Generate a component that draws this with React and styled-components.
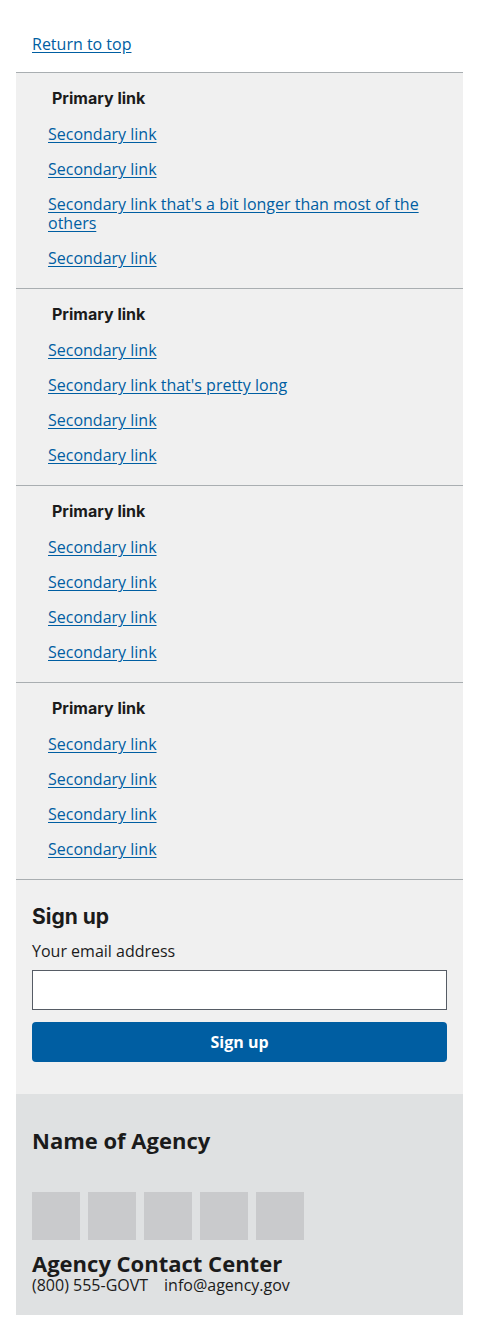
import React from 'react';
import styled, { createGlobalStyle } from 'styled-components';

const GlobalStyle = createGlobalStyle`
  body {
    margin: 0;
    background: #fff;
    font-family: 'Open Sans', 'Liberation Sans', sans-serif;
    color: #1b1b1b;
  }
`;

const Page = styled.div`
  padding: 0 16px 16px;
`;

const ReturnRow = styled.div`
  padding: 32px 16px 16px;
  font-size: 16px;
  line-height: 24px;
`;

const Link = styled.a`
  color: #005ea2;
  text-decoration: underline;
  text-underline-offset: 2px;
`;

const Nav = styled.nav`
  background: #f0f0f0;
`;

const Section = styled.section`
  border-top: 1px solid #a9aeb1;
  padding: 16px 16px 20px 32px;
`;

const PrimaryLink = styled.div`
  font-family: 'Inter', 'Open Sans', sans-serif;
  font-weight: 700;
  font-size: 16px;
  line-height: 18px;
  padding-left: 4px;
  margin-bottom: 18px;
`;

const SecondaryList = styled.ul`
  list-style: none;
  margin: 0;
  padding: 0;
  display: flex;
  flex-direction: column;
  gap: 16px;
`;

const SecondaryItem = styled.li`
  font-size: 16px;
  line-height: 19px;
`;

const SignUp = styled.section`
  background: #f0f0f0;
  border-top: 1px solid #a9aeb1;
  padding: 24px 16px 32px;
`;

const SignUpHeading = styled.h3`
  margin: 0 0 9px;
  font-family: 'Inter', 'Open Sans', sans-serif;
  font-weight: 700;
  font-size: 21px;
  line-height: 26px;
`;

const Label = styled.label`
  display: block;
  font-size: 16px;
  line-height: 24px;
  margin-bottom: 7px;
`;

const Input = styled.input`
  display: block;
  box-sizing: border-box;
  width: 100%;
  height: 40px;
  margin: 0 0 12px;
  border: 1px solid #565c65;
  background: #fff;
  font: inherit;
`;

const Button = styled.button`
  display: block;
  width: 100%;
  height: 40px;
  border: 0;
  border-radius: 4px;
  background: #005ea2;
  color: #fff;
  font-family: 'Open Sans', sans-serif;
  font-weight: 700;
  font-size: 16px;
`;

const Agency = styled.div`
  background: #dfe1e2;
  padding: 33px 16px 21px;
`;

const AgencyName = styled.h3`
  margin: 0 0 39px;
  font-weight: 700;
  font-size: 22px;
  line-height: 26px;
`;

const Logos = styled.div`
  display: flex;
  gap: 8px;
  margin-bottom: 12px;
`;

const Square = styled.span`
  width: 48px;
  height: 48px;
  background: #c9cacc;
`;

const ContactHeading = styled.h4`
  margin: 0 0 2px;
  font-weight: 700;
  font-size: 22px;
  line-height: 22px;
`;

const ContactLine = styled.div`
  display: flex;
  gap: 16px;
  font-size: 16px;
  line-height: 18px;
`;

const sections = [
  [
    'Secondary link',
    'Secondary link',
    "Secondary link that's a bit longer than most of the others",
    'Secondary link',
  ],
  ['Secondary link', "Secondary link that's pretty long", 'Secondary link', 'Secondary link'],
  ['Secondary link', 'Secondary link', 'Secondary link', 'Secondary link'],
  ['Secondary link', 'Secondary link', 'Secondary link', 'Secondary link'],
];

const App = () => (
  <Page>
    <GlobalStyle />
    <ReturnRow>
      <Link href="#">Return to top</Link>
    </ReturnRow>
    <Nav>
      {sections.map((links, i) => (
        <Section key={i}>
          <PrimaryLink>Primary link</PrimaryLink>
          <SecondaryList>
            {links.map((text, j) => (
              <SecondaryItem key={j}>
                <Link href="#">{text}</Link>
              </SecondaryItem>
            ))}
          </SecondaryList>
        </Section>
      ))}
    </Nav>
    <SignUp>
      <SignUpHeading>Sign up</SignUpHeading>
      <Label htmlFor="email">Your email address</Label>
      <Input id="email" type="email" />
      <Button type="button">Sign up</Button>
    </SignUp>
    <Agency>
      <AgencyName>Name of Agency</AgencyName>
      <Logos>
        {[0, 1, 2, 3, 4].map((n) => (
          <Square key={n} />
        ))}
      </Logos>
      <ContactHeading>Agency Contact Center</ContactHeading>
      <ContactLine>
        <span>(800) 555-GOVT</span>
        <span>info@agency.gov</span>
      </ContactLine>
    </Agency>
  </Page>
);

export default App;
